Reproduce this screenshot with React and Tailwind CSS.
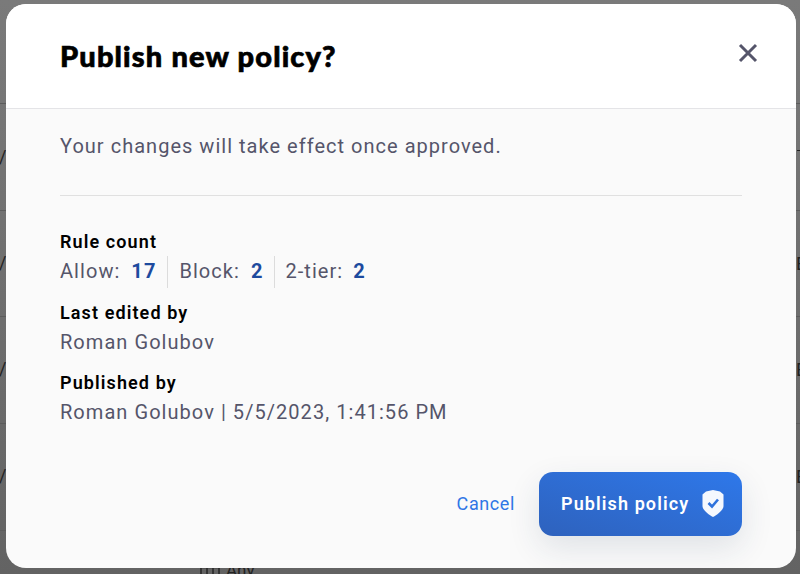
import React from "react";

const Label = ({ children }) => (
  <div className="h-[24px] text-[18px] leading-[26px] font-semibold tracking-[1.1px] text-black">{children}</div>
);
const Val = ({ children }) => (
  <div className="mt-[4px] text-[20px] leading-[28px] tracking-[1.05px] text-[#55556a]">{children}</div>
);
const edgeText = "absolute text-[#222]";

export default function App() {
  return (
    <div className="relative h-[574px] w-[800px] overflow-hidden bg-gradient-to-b from-[#7a7a7a] to-[#636363] font-['Roboto',sans-serif]">
      <div className="absolute inset-0 flex flex-col pt-[103px]">
        {[0, 1, 2, 3, 4].map((i) => (
          <div key={i} className="h-[106.7px] shrink-0 border-t border-[#5c5c5c]" />
        ))}
      </div>
      <div className={`${edgeText} left-[-1px] top-[143px] text-[18px]`}>/:</div>
      <div className={`${edgeText} left-[-1px] top-[249px] text-[18px]`}>/:</div>
      <div className={`${edgeText} left-[-1px] top-[355px] text-[18px]`}>/:</div>
      <div className={`${edgeText} left-[-1px] top-[462px] text-[18px]`}>/:</div>
      <div className="absolute left-[797px] top-[150px] h-px w-[3px] bg-[#222]" />
      <div className={`${edgeText} left-[796px] top-[250px] text-[18px]`}>E</div>
      <div className={`${edgeText} left-[796px] top-[356px] text-[18px]`}>E</div>
      <div className={`${edgeText} left-[796px] top-[463px] text-[18px]`}>E</div>
      <svg className="absolute left-[200px] top-[566px]" width="20" height="8" viewBox="0 0 20 8" fill="none" stroke="#222" strokeWidth="1.4">
        <path d="M0 1.5H20M1 1V8M7 1V8M13 1V8M19 1V8" />
      </svg>
      <div className={`${edgeText} left-[226px] top-[560px] text-[17px] leading-[20px]`}>Any</div>

      <div className="absolute left-[6px] top-[4px] flex h-[564px] w-[790px] flex-col overflow-hidden rounded-[20px] bg-[#fafafa]">
        <div className="flex h-[105px] shrink-0 items-center justify-between border-b border-[#e4e4e7] bg-white pl-[54px] pr-[36px]">
          <h1 className="font-['Lato',sans-serif] text-[29px] font-black tracking-[1.15px] text-black [-webkit-text-stroke:0.7px_black]">Publish new policy?</h1>
          <svg className="mb-[6px]" width="24" height="24" viewBox="0 0 24 24" fill="none" stroke="#55556a" strokeWidth="3">
            <path d="M4 4L20 20M20 4L4 20" />
          </svg>
        </div>
        <div className="flex flex-1 flex-col px-[54px]">
          <p className="mt-[23px] text-[20px] leading-[28px] tracking-[1.02px] text-[#55556a]">Your changes will take effect once approved.</p>
          <div className="mt-[35px] h-px w-[682px] bg-[#e0e0e0]" />
          <div className="mt-[33px]">
            <Label>Rule count</Label>
            <div className="mt-[3px] flex h-[32px] items-stretch text-[20px] leading-[30px] tracking-[1.05px] text-[#55556a]">
              <div className="pr-[11px]">Allow:<b className="ml-[11px] font-bold text-[#1d4a9e]">17</b></div>
              <div className="border-l border-[#dcdcdc] px-[11px]">Block:<b className="ml-[11px] font-bold text-[#1d4a9e]">2</b></div>
              <div className="border-l border-[#dcdcdc] pl-[10px]">2-tier:<b className="ml-[10px] font-bold text-[#1d4a9e]">2</b></div>
            </div>
          </div>
          <div className="mt-[12px]">
            <Label>Last edited by</Label>
            <Val>Roman Golubov</Val>
          </div>
          <div className="mt-[14px]">
            <Label>Published by</Label>
            <Val>Roman Golubov | 5/5/2023, 1:41:56 PM</Val>
          </div>
          <div className="mt-[46px] flex items-center justify-end gap-[24px]">
            <span className="mb-[2px] text-[18px] tracking-[0.6px] text-[#2f76e6]">Cancel</span>
            <button className="flex h-[64px] w-[203px] items-center justify-between rounded-[14px] bg-gradient-to-tr from-[#2e62bd] to-[#2e78ea] pb-[2px] pl-[22px] pr-[18px] text-[18px] font-semibold tracking-[1.1px] text-white shadow-[0_12px_32px_rgba(30,60,90,0.12)]">
              Publish policy
              <svg width="22" height="27" viewBox="0 0 22 27">
                <path fill="#f5f8fe" d="M4 1.5L11 0L18 1.5L21.5 4.5V16C21.5 20 15.5 24.5 11 27C6.5 24.5 0.5 20 0.5 16V4.5Z" />
                <path fill="none" stroke="#2e72dd" strokeWidth="2.6" d="M6.5 13L10 16.5L16 9.5" />
              </svg>
            </button>
          </div>
        </div>
      </div>
    </div>
  );
}
